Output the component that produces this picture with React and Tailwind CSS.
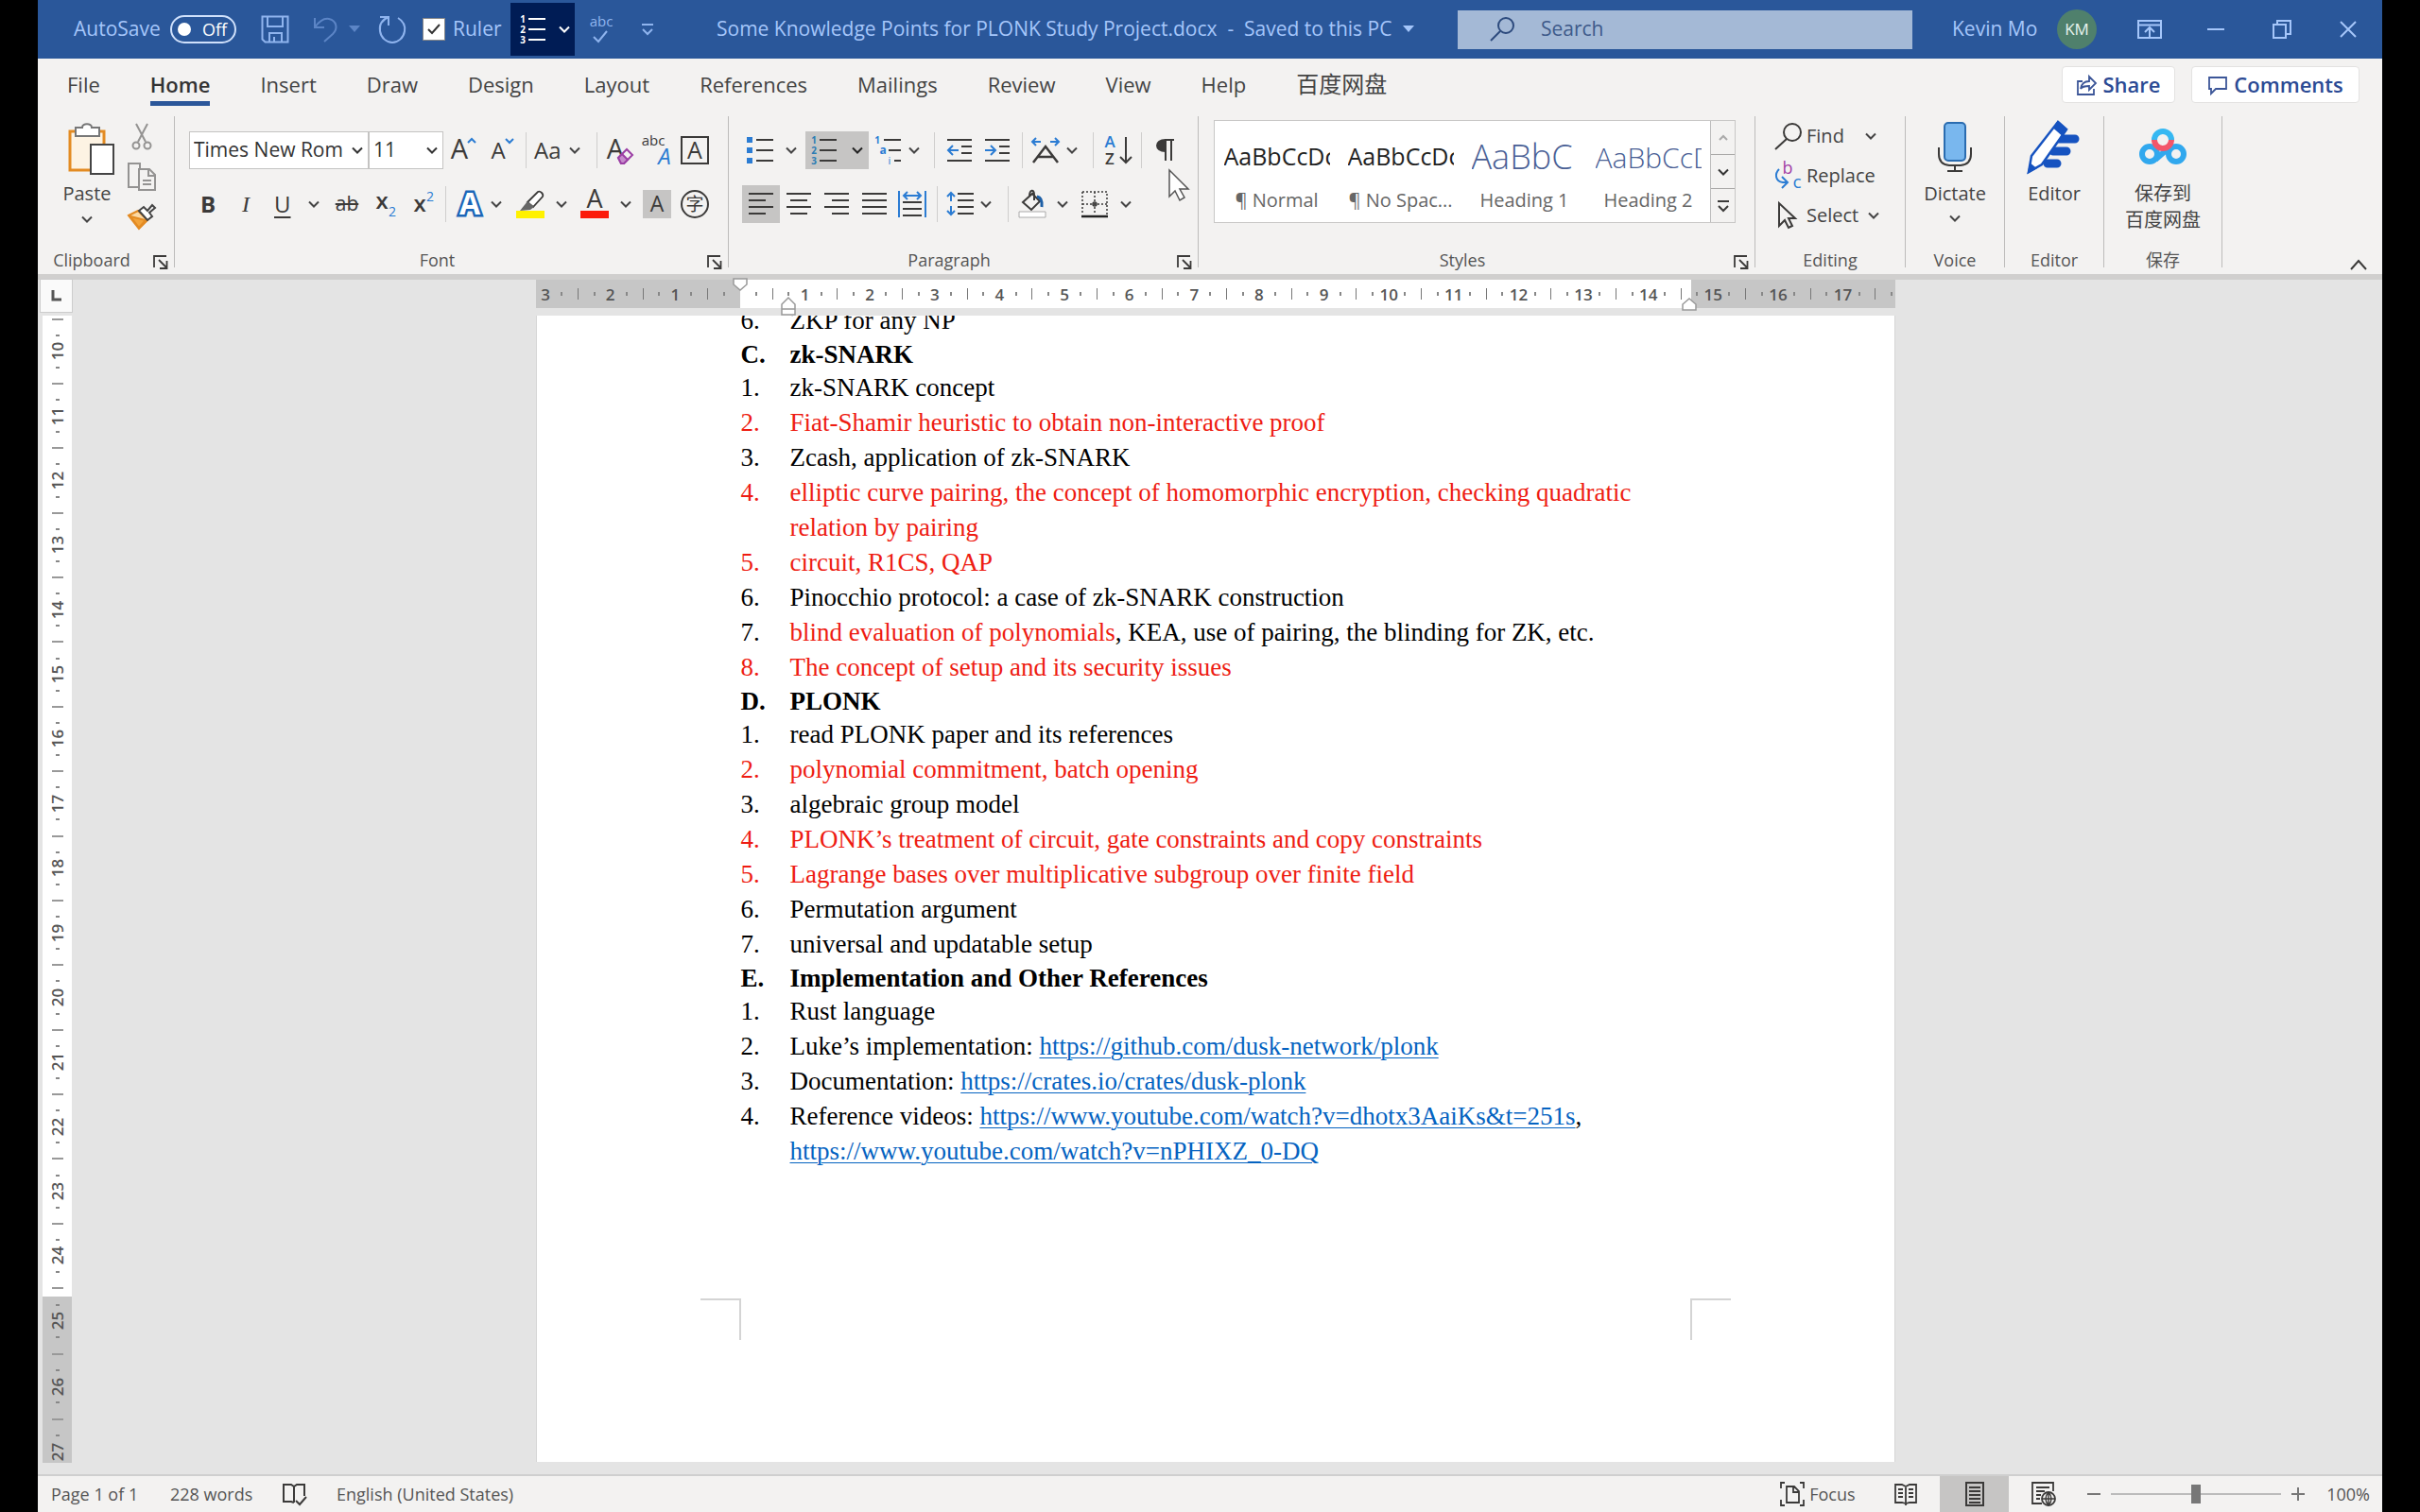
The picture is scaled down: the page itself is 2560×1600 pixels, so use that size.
import { useState } from 'react'

const TABS = ['File', 'Home', 'Insert', 'Draw', 'Design', 'Layout', 'References', 'Mailings', 'Review', 'View', 'Help']

const STYLES = [
  { name: '¶ Normal', sample: 'AaBbCcDc', cls: 'text-[25px] text-[#222]' },
  { name: '¶ No Spac...', sample: 'AaBbCcDc', cls: 'text-[25px] text-[#222]' },
  { name: 'Heading 1', sample: 'AaBbC', cls: 'text-[36px] font-light text-[#4a5f95]' },
  { name: 'Heading 2', sample: 'AaBbCcD', cls: 'text-[30px] font-light text-[#4a5f95]' },
]

const link = url => ({ url })

const LINES = [
  { n: '6.', text: 'ZKP for any NP' },
  { n: 'C.', text: 'zk-SNARK', heading: true },
  { n: '1.', text: 'zk-SNARK concept' },
  { n: '2.', text: 'Fiat-Shamir heuristic to obtain non-interactive proof', red: true },
  { n: '3.', text: 'Zcash, application of zk-SNARK' },
  { n: '4.', text: 'elliptic curve pairing, the concept of homomorphic encryption, checking quadratic relation by pairing', red: true },
  { n: '5.', text: 'circuit, R1CS, QAP', red: true },
  { n: '6.', text: 'Pinocchio protocol: a case of zk-SNARK construction' },
  { n: '7.', parts: [{ red: 'blind evaluation of polynomials' }, ', KEA, use of pairing, the blinding for ZK, etc.'] },
  { n: '8.', text: 'The concept of setup and its security issues', red: true },
  { n: 'D.', text: 'PLONK', heading: true },
  { n: '1.', text: 'read PLONK paper and its references' },
  { n: '2.', text: 'polynomial commitment, batch opening', red: true },
  { n: '3.', text: 'algebraic group model' },
  { n: '4.', text: 'PLONK’s treatment of circuit, gate constraints and copy constraints', red: true },
  { n: '5.', text: 'Lagrange bases over multiplicative subgroup over finite field', red: true },
  { n: '6.', text: 'Permutation argument' },
  { n: '7.', text: 'universal and updatable setup' },
  { n: 'E.', text: 'Implementation and Other References', heading: true },
  { n: '1.', text: 'Rust language' },
  { n: '2.', parts: ['Luke’s implementation: ', link('https://github.com/dusk-network/plonk')] },
  { n: '3.', parts: ['Documentation: ', link('https://crates.io/crates/dusk-plonk')] },
  { n: '4.', parts: ['Reference videos: ', link('https://www.youtube.com/watch?v=dhotx3AaiKs&t=251s'), ', ', link('https://www.youtube.com/watch?v=nPHIXZ_0-DQ')] },
]

/* ---------- small building blocks ---------- */

function Svg({ w = 30, h = 30, className = '', children, ...rest }) {
  return (
    <svg width={w} height={h} viewBox={`0 0 ${w} ${h}`} fill="none" stroke="#3b3a39" strokeWidth="2" className={`shrink-0 overflow-visible ${className}`} aria-hidden="true" {...rest}>
      {children}
    </svg>
  )
}

function T({ x, y, size, fill = '#3b3a39', children, ...rest }) {
  return <text x={x} y={y} fontSize={size} fill={fill} stroke="none" textAnchor="middle" {...rest}>{children}</text>
}

function Chevron({ color = '#444' }) {
  return <Svg w={12} h={8} stroke={color}><path d="M1 1.500 6 6.500 11 1.500" /></Svg>
}

function Digits({ fill }) {
  return [1, 2, 3].map(d => (
    <T key={d} x={4} y={d * 11 - 3} size={10} fill={fill} fontWeight="700">{d}</T>
  ))
}

function Btn({ label, className = 'w-10', active, children }) {
  return (
    <button type="button" aria-label={label} title={label} className={`flex h-10 shrink-0 items-center ${active ? 'bg-[#c6c5c4]' : ''} ${className}`}>
      {children}
    </button>
  )
}

const Sep = ({ className = 'mx-[6px]' }) => <span className={`h-[38px] w-px shrink-0 bg-[#cfcecd] ${className}`} />

function Launcher({ label }) {
  return (
    <button type="button" aria-label={label} className="absolute right-[6px] bottom-[5px]">
      <Svg w={16} h={15}><path d="M1 13V1h13M6 5l8 8M14.500 6v8H7" strokeWidth="1.800" /></Svg>
    </button>
  )
}

function Group({ title, launcher, className, children }) {
  return (
    <section aria-label={title} className={`relative flex shrink-0 flex-col ${className}`}>
      {children}
      <div className={`mt-auto mb-[3px] h-6 text-center text-[18px] leading-6 text-[#555] ${launcher ? 'pr-[30px]' : ''}`}>{title}</div>
      {launcher && <Launcher label={`${title} settings`} />}
    </section>
  )
}

const GroupLine = () => <span className="h-[160px] w-px shrink-0 bg-[#bdbcbb]" />

function AlignIcon({ rows }) {
  return (
    <Svg w={26} h={26}>
      {rows.map(([a, b], i) => <path key={i} d={`M${a} ${2 + i * 7}H${b}`} />)}
    </Svg>
  )
}

/* ---------- title bar ---------- */

function TitleBar() {
  const [ruler, setRuler] = useState(true)
  return (
    <header className="flex h-[62px] shrink-0 items-center bg-[#2a579a] pr-[27px] pl-[38px] text-[21px] text-[#a5c6fa]">
      <span id="autosave" className="w-[102px] shrink-0">AutoSave</span>
      <button type="button" role="switch" aria-checked="false" aria-labelledby="autosave" className="flex h-[30px] w-[70px] shrink-0 items-center gap-3 rounded-full border-2 border-[#cfe0fb] pl-[6px] text-[18px] text-white">
        <span className="h-[14px] w-[14px] rounded-full bg-white" />
        Off
      </button>
      <button type="button" aria-label="Save" className="ml-[26px]">
        <Svg stroke="#8fb4ee"><path d="M1.500 1.500h27v27h-24l-3-3zM7 1.500V12h16V1.500M9 28V19h13v9M14 28v-5" /></Svg>
      </button>
      <button type="button" aria-label="Undo" className="ml-[25px]">
        <Svg w={26} h={30} stroke="#5c85c6"><path d="M2 3v10h10M2 13C7 6 12 3 17 4c8 2 10 10 4 16l-9 8" /></Svg>
      </button>
      <span className="ml-3"><Svg w={12} h={8} stroke="none"><path d="M0 0h12L6 7z" fill="#5c85c6" /></Svg></span>
      <button type="button" aria-label="Repeat" className="ml-[19px]">
        <Svg w={30} h={32} stroke="#8fb4ee"><path d="M2 3h9v9M11 3C4 6 1 11 2 18c1 7 7 12 13 12s12-5 13-12c1-6-2-11-7-14" /></Svg>
      </button>
      <label className="ml-[17px] flex items-center gap-2">
        <span className="grid h-6 w-6 place-items-center">
          <input type="checkbox" checked={ruler} onChange={e => setRuler(e.target.checked)} className="col-start-1 row-start-1 h-6 w-6 appearance-none border border-[#888] bg-white" />
          {ruler && <Svg w={16} h={12} stroke="#333" className="pointer-events-none z-10 col-start-1 row-start-1"><path d="M2 6l4 4 8-9" /></Svg>}
        </span>
        <span className="w-[53px]">Ruler</span>
      </label>
      <button type="button" aria-label="Numbering" className="ml-[8px] flex h-[56px] w-[68px] shrink-0 items-center gap-3 bg-[#001c55] pl-[9px]">
        <Svg stroke="#fff"><Digits fill="#fff" /><path d="M10 4h18M10 15h18M10 26h18" /></Svg>
        <Chevron color="#fff" />
      </button>
      <button type="button" aria-label="Spelling" className="ml-[13px]">
        <Svg w={30} h={32} stroke="#8fb4ee"><T x={15} y={13} size={15} fill="#8fb4ee">abc</T><path d="M7 24l5 5 9-11" /></Svg>
      </button>
      <button type="button" aria-label="Customize toolbar" className="ml-[27px]">
        <Svg w={14} h={14} stroke="#8fb4ee"><path d="M1 2h12M2 7l5 5 5-5" /></Svg>
      </button>
      <h1 className="ml-[66px] whitespace-pre">Some Knowledge Points for PLONK Study Project.docx  -  Saved to this PC</h1>
      <span className="ml-[12px]"><Svg w={12} h={8} stroke="none"><path d="M0 0h12L6 7z" fill="#a5c6fa" /></Svg></span>
      <label className="ml-auto flex h-[41px] w-[481px] items-center bg-[#a4b9d6] pl-[34px]">
        <Svg w={28} h={28} stroke="#2c4a7d"><circle cx="17" cy="10" r="8" /><path d="M11 16L1 26" /></Svg>
        <input type="search" aria-label="Search" placeholder="Search" className="ml-[26px] w-80 bg-transparent text-[21px] placeholder:text-[#3e5a8a] focus:outline-none" />
      </label>
      <span className="ml-[42px] w-[111px] whitespace-nowrap">Kevin Mo</span>
      <span className="grid h-[42px] w-[42px] place-items-center rounded-full bg-[#4f806c] text-[17px] text-[#e6f3ec]">KM</span>
      <button type="button" aria-label="Ribbon display options" className="ml-[43px]">
        <Svg w={26} h={20} stroke="#a5c6fa"><path d="M1 1h24v18H1zM1 5.500h24M13 18V9M8 13l5-5 5 5" /></Svg>
      </button>
      <button type="button" aria-label="Minimize" className="ml-[47px]"><Svg w={20} h={20} stroke="#a5c6fa"><path d="M1 10h18" /></Svg></button>
      <button type="button" aria-label="Restore" className="ml-[50px]"><Svg w={20} h={20} stroke="#a5c6fa"><path d="M1 5h13v14H1zM5 5V1h14v14h-5" /></Svg></button>
      <button type="button" aria-label="Close" className="ml-[51px]"><Svg w={18} h={18} stroke="#a5c6fa"><path d="M1 1l16 16M17 1L1 17" /></Svg></button>
    </header>
  )
}

function TabRow() {
  return (
    <nav className="flex h-[61px] shrink-0 items-start pt-2 pr-6 pl-[31px]">
      <div className="flex gap-[53px] pt-1 text-[22px] leading-[30px] text-[#444]">
        {TABS.map(t => (
          <button key={t} type="button" className={t === 'Home' ? 'border-b-[5px] border-[#2b579a] pb-[3px] font-semibold text-[#333]' : 'self-start'}>{t}</button>
        ))}
        <button type="button" className="self-start text-[24px]">百度网盘</button>
      </div>
      <div className="ml-auto flex gap-[17px] text-[22px] font-semibold text-[#2b4a94]">
        <button type="button" className="flex h-[39px] w-[120px] items-center justify-center gap-[6px] rounded-sm border border-[#e3e2e1] bg-white">
          <Svg w={22} h={22} stroke="#3c5698"><path d="M7 7H2v14h17v-6M5 15c1-6 5-8 9-8V2l7 7-7 7v-4c-4 0-7 0-9 3z" strokeWidth="1.800" /></Svg>
          Share
        </button>
        <button type="button" className="flex h-[39px] w-[178px] items-center justify-center gap-[6px] rounded-sm border border-[#e3e2e1] bg-white">
          <Svg w={22} h={20} stroke="#3c5698"><path d="M2 2h18v12H9l-5 5v-5H2z" strokeWidth="1.800" /></Svg>
          Comments
        </button>
      </div>
    </nav>
  )
}

/* ---------- ribbon ---------- */

function ClipboardGroup() {
  return (
    <Group title="Clipboard" launcher className="w-[144px] pt-[7px]">
      <div className="flex gap-[13px] pl-[22px]">
        <button type="button" className="flex w-[60px] flex-col items-center text-[20px] text-[#444]">
          <Svg w={60} h={56}>
            <path d="M12 9h36v41H12z" fill="#fdf3e3" stroke="#e38b23" strokeWidth="3" />
            <path d="M18 5h7c0-5 10-5 10 0h8v9H18z" fill="#fff" stroke="#777" />
            <path d="M34 23h24v31H34z" fill="#fff" stroke="#444" />
          </Svg>
          <span className="mt-1 leading-[30px]">Paste</span>
          <span className="mt-2"><Chevron /></span>
        </button>
        <div className="flex flex-col items-center gap-[13px]">
          <button type="button" aria-label="Cut">
            <Svg w={30} h={29} stroke="#949392"><path d="M9 1l10 19M21 1L11 20" /><circle cx="9" cy="24" r="3.500" /><circle cx="21" cy="24" r="3.500" /></Svg>
          </button>
          <button type="button" aria-label="Copy">
            <Svg w={30} h={30} stroke="#949392"><path d="M11 26H1V1h12v5M12 7h11l6 6v16H12zM22 7v7h7M16 19h9M16 23h9" /></Svg>
          </button>
          <button type="button" aria-label="Format painter">
            <Svg w={30} h={28}><path d="M1 13l10-5 10 10-9 9z" fill="#fbd9a5" stroke="#e38b23" /><path d="M3 14l16 4-7 8z" fill="#f2a33a" stroke="#e38b23" /><path d="M12 8l5-4 4 4 5-6 3 3-6 5 3 4-5 4z" fill="#fff" stroke="#444" /></Svg>
          </button>
        </div>
      </div>
    </Group>
  )
}

function Combo({ label, value, className }) {
  return (
    <span className={`relative shrink-0 ${className}`}>
      <select aria-label={label} defaultValue={value} className="block h-10 w-full appearance-none border border-[#c4c3c2] bg-white pl-1 text-[21px] text-[#333]">
        <option>{value}</option>
      </select>
      <span className="pointer-events-none absolute inset-y-0 right-[6px] flex items-center"><Chevron color="#333" /></span>
    </span>
  )
}

function FontGroup() {
  return (
    <Group title="Font" launcher className="w-[585px] pt-4">
      <div className="flex items-center pl-[15px]">
        <Combo label="Font" value="Times New Rom" className="w-[190px]" />
        <Combo label="Font size" value="11" className="w-[79px]" />
        <Btn label="Increase font size" className="w-[42px] justify-center">
          <Svg><T x={11} y={24} size={29}>A</T><path d="M20 7l4-4 4 4" stroke="#2b7cd3" /></Svg>
        </Btn>
        <Btn label="Decrease font size" className="w-[42px] justify-center">
          <Svg><T x={10} y={24} size={24}>A</T><path d="M18 3l4 4 4-4" stroke="#2b7cd3" /></Svg>
        </Btn>
        <Sep className="mx-[3px]" />
        <Btn label="Change case" className="w-[68px] gap-[8px] pl-[5px] text-[24px] text-[#3b3a39]">Aa <Chevron /></Btn>
        <Sep className="mx-[3px]" />
        <Btn label="Clear formatting" className="w-10 justify-center">
          <Svg><T x={11} y={24} size={29}>A</T><path d="M14 23l9-9 6 6-9 9h-3z" fill="#f3f2f1" stroke="#9b3fa5" /><path d="M14 23l4-4 6 6-4 4h-3z" fill="#c58bcb" stroke="#9b3fa5" /></Svg>
        </Btn>
        <Btn label="Phonetic guide" className="w-10 justify-center">
          <Svg w={34}><T x={13} y={10} size={15}>abc</T><T x={25} y={30} size={24} fill="#2b7cd3" fontStyle="italic">A</T></Svg>
        </Btn>
        <Btn label="Character border" className="w-10 justify-center">
          <Svg><path d="M1 1h28v28H1z" /><T x={15} y={24} size={25}>A</T></Svg>
        </Btn>
      </div>
      <div className="mt-[17px] flex items-center pl-[15px] text-[24px] text-[#3b3a39]">
        <Btn label="Bold" className="w-10 justify-center font-bold">B</Btn>
        <Btn label="Italic" className="w-10 justify-center font-['Liberation_Serif',serif] italic">I</Btn>
        <Btn label="Underline" className="w-[66px] gap-[18px] pl-[10px]"><span className="leading-6 underline underline-offset-4">U</span> <Chevron /></Btn>
        <Btn label="Strikethrough" className="w-[42px] justify-center text-[21px]"><span className="px-px line-through">ab</span></Btn>
        <Btn label="Subscript" className="w-[42px] justify-center"><Svg w={24}><T x={7} y={20} size={24} fontWeight="600">x</T><T x={18} y={28} size={14} fill="#2b7cd3">2</T></Svg></Btn>
        <Btn label="Superscript" className="w-[38px] justify-center"><Svg w={24}><T x={7} y={23} size={24} fontWeight="600">x</T><T x={18} y={12} size={14} fill="#2b7cd3">2</T></Svg></Btn>
        <Sep className="mx-[3px]" />
        <Btn label="Text effects" className="w-[62px] gap-[7px] pl-[7px]">
          <Svg><text x="15" y="26" fontSize="32" fontWeight="700" textAnchor="middle" fill="#fff" stroke="#1b66b8" strokeWidth="5" paintOrder="stroke">A</text></Svg>
          <Chevron />
        </Btn>
        <Btn label="Highlight color" className="w-[69px] gap-3 pl-[9px]">
          <Svg><path d="M12 13L23 2q2-1 4 1t1 4L18 18z" fill="#fff" strokeWidth="1.800" /><path d="M12 12l7 6-4 3-11 1z" fill="#666" stroke="none" /><path d="M0 22h30v8H0z" fill="#fff100" stroke="none" /></Svg>
          <Chevron />
        </Btn>
        <Btn label="Font color" className="w-[69px] gap-3 pl-[8px]">
          <Svg><T x={15} y={19} size={27}>A</T><path d="M0 22h30v8H0z" fill="#fb1b0b" stroke="none" /></Svg>
          <Chevron />
        </Btn>
        <Btn label="Character shading" className="w-10 justify-center">
          <Svg><path d="M0 0h30v30H0z" fill="#c6c5c4" stroke="none" /><T x={15} y={23} size={23}>A</T></Svg>
        </Btn>
        <Btn label="Enclose characters" className="w-10 justify-center">
          <Svg><circle cx="15" cy="15" r="14" /><T x={15} y={22} size={19}>字</T></Svg>
        </Btn>
      </div>
    </Group>
  )
}

function ParagraphGroup() {
  return (
    <Group title="Paragraph" launcher className="w-[496px] pt-4">
      <div className="flex items-center pl-[14px]">
        <Btn label="Bullets" className="w-[67px] gap-3 pl-1">
          <Svg><path d="M1 1h6v6H1zM1 12h6v6H1zM1 23h6v6H1z" fill="#2b7cd3" stroke="none" /><path d="M11 4h18M11 15h18M11 26h18" /></Svg>
          <Chevron />
        </Btn>
        <Btn label="Numbered list" active className="w-[67px] gap-[14px] pl-[5px]">
          <Svg><Digits fill="#2b7cb3" /><path d="M10 4h18M10 15h18M10 26h18" /></Svg>
          <Chevron color="#222" />
        </Btn>
        <Btn label="Multilevel list" className="w-[63px] gap-[6px] pl-[6px]">
          <Svg>
            <T x={3} y={8} size={10} fill="#2b7cd3" fontWeight="700">1</T><T x={9} y={19} size={12} fill="#2b7cd3" fontWeight="700">a</T><T x={16} y={30} size={11} fill="#2b7cd3">i</T>
            <path d="M10 4h18M15 15h13M21 26h7" />
          </Svg>
          <Chevron />
        </Btn>
        <Sep />
        <Btn label="Decrease indent" className="w-10 justify-center">
          <Svg w={26} h={26}><path d="M0 2h26M15 9h11M15 16h11M0 24h26" /><path d="M12 13H2M6 8l-5 5 5 5" stroke="#2b7cd3" /></Svg>
        </Btn>
        <Btn label="Increase indent" className="w-10 justify-center">
          <Svg w={26} h={26}><path d="M0 2h26M15 9h11M15 16h11M0 24h26" /><path d="M0 13h10M6 8l5 5-5 5" stroke="#2b7cd3" /></Svg>
        </Btn>
        <Sep />
        <Btn label="Asian layout" className="w-[62px] gap-[7px] pl-[3px]">
          <Svg><path d="M2 28L15 11l13 17M7 22h16" strokeWidth="2.500" /><path d="M10 6H2M5 2L1 6l4 4M20 6h8M25 2l4 4-4 4" stroke="#2b7cd3" /></Svg>
          <Chevron />
        </Btn>
        <Sep />
        <Btn label="Sort" className="w-[38px] justify-center">
          <Svg><T x={7} y={12} size={17} fill="#2b7cd3" fontWeight="600">A</T><T x={7} y={30} size={17} fontWeight="600">Z</T><path d="M24 1v27M18 22l6 6 6-6" /></Svg>
        </Btn>
        <Sep />
        <Btn label="Show paragraph marks" className="w-[38px] justify-center">
          <Svg w={20} h={26}><path d="M10 2C-2 2-2 14 10 14z" fill="#3b3a39" /><path d="M9 2h10M10 2v22M16 2v22" /></Svg>
        </Btn>
      </div>
      <div className="mt-[17px] flex items-center pl-[14px]">
        <Btn label="Align left" active className="w-10 justify-center"><AlignIcon rows={[[0, 26], [0, 18], [0, 26], [0, 18]]} /></Btn>
        <Btn label="Center" className="w-10 justify-center"><AlignIcon rows={[[0, 26], [4, 22], [0, 26], [4, 22]]} /></Btn>
        <Btn label="Align right" className="w-10 justify-center"><AlignIcon rows={[[0, 26], [8, 26], [0, 26], [8, 26]]} /></Btn>
        <Btn label="Justify" className="w-10 justify-center"><AlignIcon rows={[[0, 26], [0, 26], [0, 26], [0, 26]]} /></Btn>
        <Btn label="Distribute" className="w-10 justify-center">
          <Svg><path d="M5 13h20M5 20h20M5 27h20" /><path d="M1 1v28M29 1v28M6 6h18M10 2L6 6l4 4M20 2l4 4-4 4" stroke="#2b7cd3" /></Svg>
        </Btn>
        <Sep />
        <Btn label="Line spacing" className="w-[62px] gap-[7px] pl-[2px]">
          <Svg><path d="M13 4h17M13 11h17M13 18h17M13 25h17" /><path d="M6 3v9M2 7l4-4 4 4M6 17v9M2 22l4 4 4-4" stroke="#2b7cd3" /></Svg>
          <Chevron />
        </Btn>
        <Sep />
        <Btn label="Shading" className="w-16 gap-[11px] pl-[4px]">
          <Svg><path d="M5 13L15 4l8 8-9 9zM12 7c0-8 5-8 5-2v6" /><path d="M20 7q6 1 5 11" stroke="#1d5fa6" strokeWidth="3" /><path d="M1 23h28v6H1z" fill="#fff" stroke="#aaa" strokeWidth="1" /></Svg>
          <Chevron />
        </Btn>
        <Btn label="Borders" className="w-[66px] gap-3 pl-[6px]">
          <Svg><path d="M2 2h26v24M2 2v24M15 2v24M2 15h26" strokeDasharray="2 2" strokeWidth="1.500" /><circle cx="15" cy="15" r="2" strokeWidth="1.500" /><path d="M1 28h28" strokeWidth="2.500" stroke="#222" /></Svg>
          <Chevron />
        </Btn>
      </div>
      {/* mouse pointer resting under the pilcrow */}
      <Svg w={24} h={36} stroke="#555" strokeWidth="1.500" className="absolute top-[55px] right-[8px]"><path d="M2 2v28l6-6 5 10 5-3-5-9h9z" fill="#fff" /></Svg>
    </Group>
  )
}

function StylesGroup() {
  return (
    <Group title="Styles" launcher className="w-[588px] pt-1">
      <div className="ml-4 flex h-[109px] w-[552px] border border-[#c8c7c6] bg-white">
        {STYLES.map(s => (
          <button key={s.name} type="button" className="flex w-[131px] shrink-0 flex-col items-center">
            <span className={`mt-3 flex h-[52px] w-[112px] items-center overflow-hidden whitespace-nowrap ${s.cls}`}>{s.sample}</span>
            <span className="text-[20px] leading-[40px] text-[#666]">{s.name}</span>
          </button>
        ))}
        <div className="flex w-[26px] shrink-0 flex-col divide-y divide-[#a9a8a7] border-l border-[#bbb] bg-[#f3f2f1]">
          <button type="button" aria-label="Previous styles" className="grid flex-1 place-items-center"><Svg w={12} h={8} stroke="#aaa"><path d="M2 6l4-4 4 4" /></Svg></button>
          <button type="button" aria-label="Next styles" className="grid flex-1 place-items-center"><Chevron color="#333" /></button>
          <button type="button" aria-label="More styles" className="grid flex-1 place-items-center"><Svg w={14} h={14}><path d="M1 2h12M2 7l5 5 5-5" /></Svg></button>
        </div>
      </div>
    </Group>
  )
}

function EditingGroup() {
  return (
    <Group title="Editing" className="w-[158px]">
      <div className="flex flex-col pl-[20px] text-[20px] text-[#444]">
        <button type="button" className="flex h-[42px] items-center gap-1">
          <Svg><circle cx="19" cy="11" r="9" /><path d="M13 18L1 29" /></Svg>
          <span className="w-[58px] text-left">Find</span><Chevron />
        </button>
        <button type="button" className="flex h-[42px] items-center gap-1">
          <Svg><T x={14} y={13} size={18} fill="#a33fa5">b</T><T x={24} y={28} size={19} fill="#2b7cd3">c</T><path d="M5 8c-5 5-4 13 4 14h4M8 16l6 6-6 6" stroke="#2b7cd3" /></Svg>
          Replace
        </button>
        <button type="button" className="flex h-[42px] items-center gap-1">
          <Svg><path d="M5 2v24l6-6 4 8 4-2-4-8h7z" /></Svg>
          <span className="w-[61px] text-left">Select</span><Chevron />
        </button>
      </div>
    </Group>
  )
}

function BigButton({ label, children, icon }) {
  return (
    <button type="button" className="flex w-full flex-col items-center text-[20px] leading-[28px] text-[#444]">
      <span className="mt-1 mb-2 flex h-[56px] items-center">{icon}</span>
      <span>{label}</span>
      {children}
    </button>
  )
}

function Ribbon() {
  return (
    <div className="flex h-[167px] shrink-0">
      <ClipboardGroup /><GroupLine />
      <FontGroup /><GroupLine />
      <ParagraphGroup /><GroupLine />
      <StylesGroup /><GroupLine />
      <EditingGroup /><GroupLine />
      <Group title="Voice" className="w-[104px]">
        <BigButton label="Dictate" icon={
          <Svg w={36} h={54}><rect x="7" y="2" width="22" height="40" rx="4" fill="#79b7ee" stroke="#2a6cb0" /><path d="M1 28v7q0 11 11 12h12q11-1 11-12v-7M18 47v6M10 53h16" /></Svg>
        }>
          <span className="mt-[8px]"><Chevron /></span>
        </BigButton>
      </Group>
      <GroupLine />
      <Group title="Editor" className="w-[104px]">
        <BigButton label="Editor" icon={
          <Svg w={58} h={56}><path d="M34 20h17M28 33h14M22 46h10" stroke="#1653c0" strokeWidth="9" strokeLinecap="round" /><path d="M33 2l9 8-26 37-14 8 3-17z" fill="#fff" stroke="#1653c0" strokeWidth="2.500" /><path d="M33 2l9 8-4 6-9-8zM2 55l2-8 5 4z" fill="#1653c0" stroke="#1653c0" /></Svg>
        } />
      </Group>
      <GroupLine />
      <Group title="保存" className="w-[124px]">
        <BigButton label="保存到" icon={
          <Svg w={50} h={40} strokeWidth="6">
            <circle cx="11" cy="28" r="8" stroke="#31a8ee" /><circle cx="39" cy="28" r="8" stroke="#31a8ee" />
            <path d="M17 34l15-13" stroke="#31a8ee" />
            <path d="M16 13a9 9 0 0 1 18 0" stroke="#35b8f2" /><path d="M16 13a9 9 0 0 0 18 0" stroke="#f3566a" />
          </Svg>
        }>
          <span>百度网盘</span>
        </BigButton>
      </Group>
      <GroupLine />
      <button type="button" aria-label="Collapse ribbon" className="mr-[15px] mb-1 ml-auto self-end"><Svg w={20} h={12}><path d="M2 11l8-9 8 9" /></Svg></button>
    </div>
  )
}

/* ---------- rulers ---------- */

// marks come every quarter centimetre: number, dot, line, dot
function mark(q) {
  if (q % 4 === 0) return q === 0 ? '' : String(Math.abs(q / 4))
  return q % 2 === 0 ? 'line' : 'dot'
}

const range = (from, to) => Array.from({ length: to - from + 1 }, (_, i) => from + i)

function HorizontalRuler() {
  return (
    <div className="relative h-[30px] bg-[linear-gradient(to_right,#c6c6c6_15%,#fff_15%,#fff_85%,#c6c6c6_85%)] text-[17px] leading-none font-semibold text-[#555]">
      <div className="-mr-[5px] flex h-full items-center pl-[2px]">
        {range(-12, 71).map(q => {
          const m = mark(q)
          return (
            <span key={q} className="flex w-0 flex-1 items-center justify-center">
              {m === 'line' ? <i className="h-3 w-px bg-[#777]" /> : m === 'dot' ? <i className="h-1 w-[2px] bg-[#888]" /> : m}
            </span>
          )
        })}
      </div>
      <Svg w={16} h={14} stroke="#999" strokeWidth="1.500" className="absolute -top-[2px] left-[208px]"><path d="M1 1h14v6l-7 6-7-6z" fill="#fff" /></Svg>
      <Svg w={16} h={20} stroke="#999" strokeWidth="1.500" className="absolute top-[18px] left-[259px]"><path d="M1 8l7-7 7 7v11H1zM1 13h14" fill="#fff" /></Svg>
      <Svg w={16} h={14} stroke="#999" strokeWidth="1.500" className="absolute top-[19px] left-[1212px]"><path d="M1 7l7-6 7 6v6H1z" fill="#fff" /></Svg>
    </div>
  )
}

function RulerCells({ from, to }) {
  return range(from, to).map(q => {
    const m = mark(q)
    return (
      <span key={q} className="flex h-0 flex-1 items-center justify-center">
        {m === 'line' ? <i className="h-[2px] w-3 bg-[#999]" /> : m === 'dot' ? <i className="h-[2px] w-1 bg-[#888]" /> : <span className="-rotate-90">{m}</span>}
      </span>
    )
  })
}

function VerticalRuler() {
  return (
    <div className="flex w-[37px] shrink-0 flex-col pb-[12px] pl-[2px] text-[17px] leading-none font-semibold text-[#555]">
      <div className="mt-[-1px] mb-[3px] grid h-[36px] place-items-center border border-[#ccc] bg-[#fafafa]">
        <Svg w={12} h={12} stroke="#555" strokeWidth="3"><path d="M2 0v10h9" /></Svg>
      </div>
      <div className="mr-px ml-[3px] flex flex-1 flex-col overflow-hidden bg-white">
        <div className="-mt-[5px] flex flex-1 flex-col"><RulerCells from={38} to={98} /></div>
      </div>
      <div className="mr-px ml-[3px] flex h-[176px] flex-col bg-[#c6c6c6] pb-[3px]"><RulerCells from={99} to={108} /></div>
    </div>
  )
}

/* ---------- document ---------- */

function Part({ part }) {
  if (typeof part === 'string') return part
  if (part.red) return <span className="text-[#ee1c12]">{part.red}</span>
  return <a href={part.url} className="text-[#0563c1] underline decoration-1 underline-offset-3">{part.url}</a>
}

function Line({ n, text, parts, heading, red }) {
  return (
    <li className={`flex ${heading ? 'leading-[34px] font-bold' : 'leading-[37px]'} ${red ? 'text-[#ee1c12]' : 'text-black'}`}>
      <span className="w-[52px] shrink-0">{n}</span>
      <span>{parts ? parts.map((p, i) => <Part key={i} part={p} />) : text}</span>
    </li>
  )
}

function Page() {
  return (
    <article className="flex flex-1 flex-col overflow-hidden border-x border-[#d6d6d6] bg-white">
      <ol className="-mt-[13px] px-[216px] font-['Liberation_Serif','Times_New_Roman',serif] text-[27px]">
        {LINES.map((l, i) => <Line key={i} {...l} />)}
      </ol>
      {/* bottom margin corners */}
      <div className="mt-auto mb-[129px] flex justify-between px-[173px]">
        <span className="h-11 w-[43px] border-t-2 border-r-2 border-[#d4d4d4]" />
        <span className="h-11 w-[43px] border-t-2 border-l-2 border-[#d4d4d4]" />
      </div>
    </article>
  )
}

function StatusBar() {
  const [zoom, setZoom] = useState(50)
  return (
    <footer className="flex h-[40px] shrink-0 items-center border-t-2 border-[#cfcfcf] bg-[#f3f2f1] pr-[13px] pl-[14px] text-[18px] text-[#555]">
      <span className="w-[126px]">Page 1 of 1</span>
      <span className="w-[118px]">228 words</span>
      <button type="button" aria-label="Proofing" className="w-[58px]">
        <Svg w={28} h={26}><path d="M13 22l-3-1H2V3h8l3 2 3-2h8v12M13 5v17M15 20l4 4 7-8" /></Svg>
      </button>
      <span>English (United States)</span>
      <button type="button" className="ml-auto flex items-center gap-1">
        <Svg w={28} h={28}><path d="M6 2H2v6M22 2h4v6M6 26H2v-6M22 26h4v-6M8 6h8l5 5v12H8zM15 6v6h6" strokeWidth="1.800" /></Svg>
        <span className="w-[50px] text-left">Focus</span>
      </button>
      <button type="button" aria-label="Read mode" className="ml-[39px]">
        <Svg w={26} h={26}><path d="M13 23l-4-1H2V3h7l4 2 4-2h7v19h-7zM13 5v20M5 8h5M5 12h5M5 16h5M16 8h5M16 12h5M16 16h5" strokeWidth="1.800" /></Svg>
      </button>
      <button type="button" aria-label="Print layout" className="ml-[23px] grid h-[38px] w-[73px] place-items-center bg-[#c6c5c4]">
        <Svg w={22} h={26}><path d="M2 1h18v24H2zM5 6h12M5 10h12M5 14h12M5 18h12M5 22h12" /></Svg>
      </button>
      <button type="button" aria-label="Web layout" className="ml-[23px]">
        <Svg w={28} h={28}><path d="M12 24H2V2h22v9M6 7h14M6 11h9M6 15h5M6 19h4" strokeWidth="1.800" /><circle cx="19" cy="19" r="7" fill="#f3f2f1" strokeWidth="1.800" /><path d="M12 19h14M19 12v14M19 12q-6 7 0 14M19 12q6 7 0 14" strokeWidth="1.400" /></Svg>
      </button>
      <button type="button" aria-label="Zoom out" className="ml-[31px]"><Svg w={16} h={16} stroke="#777"><path d="M1 8h14" /></Svg></button>
      <input
        type="range" aria-label="Zoom" min="0" max="100" value={zoom} onChange={e => setZoom(Number(e.target.value))}
        className="mx-[10px] h-6 w-[180px] appearance-none bg-transparent [&::-webkit-slider-runnable-track]:h-[2px] [&::-webkit-slider-runnable-track]:bg-[#bbb] [&::-webkit-slider-thumb]:-mt-[9px] [&::-webkit-slider-thumb]:h-5 [&::-webkit-slider-thumb]:w-[10px] [&::-webkit-slider-thumb]:appearance-none [&::-webkit-slider-thumb]:bg-[#777]"
      />
      <button type="button" aria-label="Zoom in"><Svg w={16} h={16} stroke="#777"><path d="M1 8h14M8 1v14" /></Svg></button>
      <span className="ml-[22px]">100%</span>
    </footer>
  )
}

export default function App() {
  return (
    <div className="h-screen bg-black px-10 font-['Open_Sans','Noto_Sans_CJK_SC',sans-serif]">
      <div className="flex h-full flex-col bg-[#f3f2f1]">
        <TitleBar />
        <TabRow />
        <Ribbon />
        <div className="h-[6px] shrink-0 bg-[#d0cfce]" />
        <main className="flex min-h-0 flex-1 bg-[#e4e4e4]">
          <VerticalRuler />
          <div className="flex flex-1 justify-center pr-[26px]">
            <div className="flex w-[1438px] flex-col pb-[13px]">
              <HorizontalRuler />
              <div className="h-[8px] shrink-0" />
              <Page />
            </div>
          </div>
        </main>
        <StatusBar />
      </div>
    </div>
  )
}
